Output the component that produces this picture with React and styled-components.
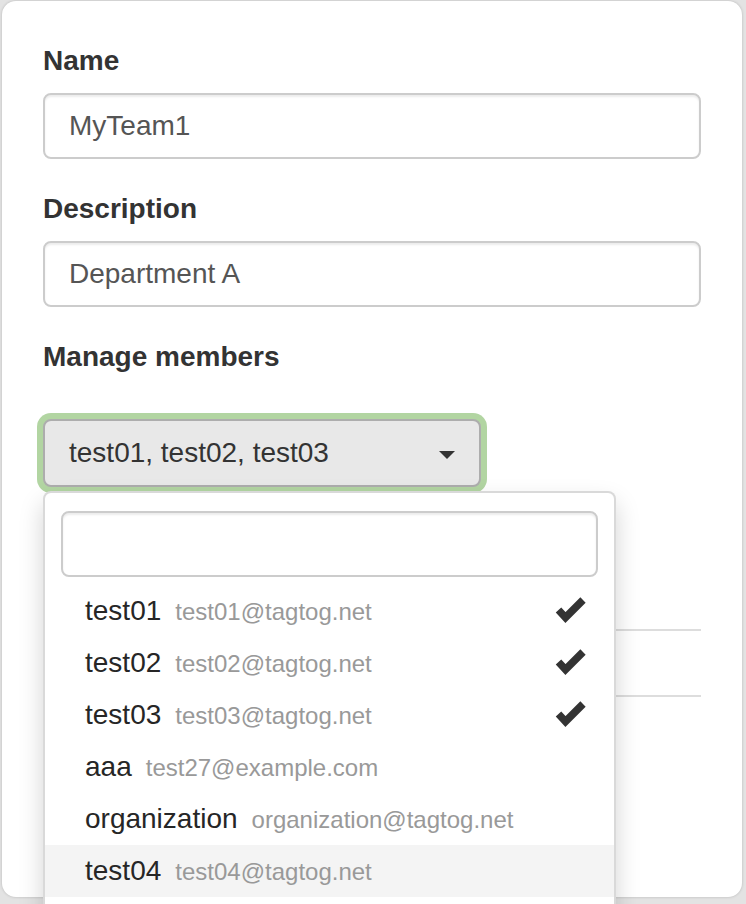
import styled, { createGlobalStyle, css } from 'styled-components';

const members = [
  { id: 1, name: 'test01', email: 'test01@tagtog.net', selected: true },
  { id: 2, name: 'test02', email: 'test02@tagtog.net', selected: true },
  { id: 3, name: 'test03', email: 'test03@tagtog.net', selected: true },
  { id: 4, name: 'aaa', email: 'test27@example.com' },
  { id: 5, name: 'organization', email: 'organization@tagtog.net' },
  { id: 6, name: 'test04', email: 'test04@tagtog.net', hover: true },
];

const CheckIcon = () => (
  <svg width='32' height='26' viewBox='0 0 32 26'>
    <polyline
      points='3.5,13 10.5,20.5 28,3'
      fill='none'
      stroke='#333'
      strokeWidth='7.5'
      strokeLinejoin='miter'
    />
  </svg>
);

const App = () => {
  const selected = members.filter((m) => m.selected).map((m) => m.name);

  return (
    <>
      <GlobalStyle />
      <Modal>
        <Body>
          <FormGroup>
            <Label>Name</Label>
            <TextInput defaultValue='MyTeam1' readOnly />
          </FormGroup>
          <FormGroup>
            <Label>Description</Label>
            <TextInput defaultValue='Department A' readOnly />
          </FormGroup>
          <FormGroup>
            <Label>Manage members</Label>
            <SelectWrap>
              <SelectButton>
                {selected.join(', ')}
                <Caret />
              </SelectButton>
              <Menu>
                <SearchBox>
                  <SearchInput />
                </SearchBox>
                <Options>
                  {members.map((m) => (
                    <Option key={m.id} $hover={m.hover}>
                      <OptName>{m.name}</OptName>
                      <OptEmail>{m.email}</OptEmail>
                      {m.selected && (
                        <Check>
                          <CheckIcon />
                        </Check>
                      )}
                    </Option>
                  ))}
                </Options>
              </Menu>
            </SelectWrap>
          </FormGroup>
          {/* member rows, mostly hidden under the open menu */}
          <MemberTable>
            <MemberRow />
            <MemberRow />
            <MemberRow />
          </MemberTable>
        </Body>
      </Modal>
    </>
  );
};

export default App;

const GlobalStyle = createGlobalStyle`
  html, body {
    margin: 0;
    height: 904px;
    overflow: hidden;
    background: #e3e3e3;
    font-family: 'Liberation Sans', Arial, Helvetica, sans-serif;
  }
  * {
    box-sizing: border-box;
  }
`;

const Modal = styled.div`
  margin: 1px 0 0 2px;
  width: 740px;
  height: 896px;
  background: #fff;
  border-radius: 14px;
  box-shadow: 0 0 3px rgba(0, 0, 0, 0.2);
`;

const Body = styled.div`
  padding: 40px 41px 0;
`;

const FormGroup = styled.div`
  margin-bottom: 30px;
`;

const Label = styled.label`
  display: block;
  font-size: 28px;
  line-height: 40px;
  font-weight: 700;
  color: #333;
  margin-bottom: 12px;
`;

const TextInput = styled.input`
  display: block;
  width: 100%;
  height: 66px;
  padding: 0 24px;
  font-family: inherit;
  font-size: 28px;
  color: #555;
  background: #fff;
  border: 2px solid #ccc;
  border-radius: 8px;
  box-shadow: inset 0 2px 2px rgba(0, 0, 0, 0.075);
  outline: none;
`;

const SelectWrap = styled.div`
  position: relative;
  width: 438px;
  margin-top: 42px;
`;

const SelectButton = styled.div`
  position: relative;
  height: 68px;
  padding: 0 24px;
  display: flex;
  align-items: center;
  font-size: 28px;
  color: #333;
  background: #e8e8e8;
  border: 2px solid #adadad;
  border-radius: 8px;
  box-shadow: 0 0 0 6px #b2d5a2;
`;

const Caret = styled.span`
  position: absolute;
  right: 24px;
  top: 30px;
  width: 0;
  height: 0;
  border-top: 8px solid #333;
  border-left: 8px solid transparent;
  border-right: 8px solid transparent;
`;

const Menu = styled.div`
  position: absolute;
  top: calc(100% + 4px);
  left: 0;
  width: 573px;
  padding: 10px 0;
  background: #fff;
  border: 2px solid rgba(0, 0, 0, 0.15);
  border-radius: 8px;
  box-shadow: 0 12px 24px rgba(0, 0, 0, 0.175);
  z-index: 10;
`;

const SearchBox = styled.div`
  padding: 8px 16px;
`;

const SearchInput = styled.input`
  display: block;
  width: 100%;
  height: 66px;
  border: 2px solid #ccc;
  border-radius: 8px;
  box-shadow: inset 0 2px 2px rgba(0, 0, 0, 0.075);
  outline: none;
`;

const Options = styled.ul`
  list-style: none;
  margin: 0;
  padding: 0 0 52px;
`;

const Option = styled.li`
  position: relative;
  display: flex;
  align-items: baseline;
  gap: 14px;
  height: 52px;
  line-height: 52px;
  padding: 0 40px;
  ${(props) =>
    props.$hover &&
    css`
      background: #f4f4f4;
    `}
`;

const OptName = styled.span`
  font-size: 28px;
  color: #262626;
`;

const OptEmail = styled.span`
  font-size: 24px;
  color: #999;
`;

const Check = styled.span`
  position: absolute;
  right: 27px;
  top: 12px;
  display: flex;
`;

const MemberTable = styled.div`
  margin-top: 76px;
`;

const MemberRow = styled.div`
  height: 66px;
  & + & {
    border-top: 2px solid #ddd;
  }
`;
